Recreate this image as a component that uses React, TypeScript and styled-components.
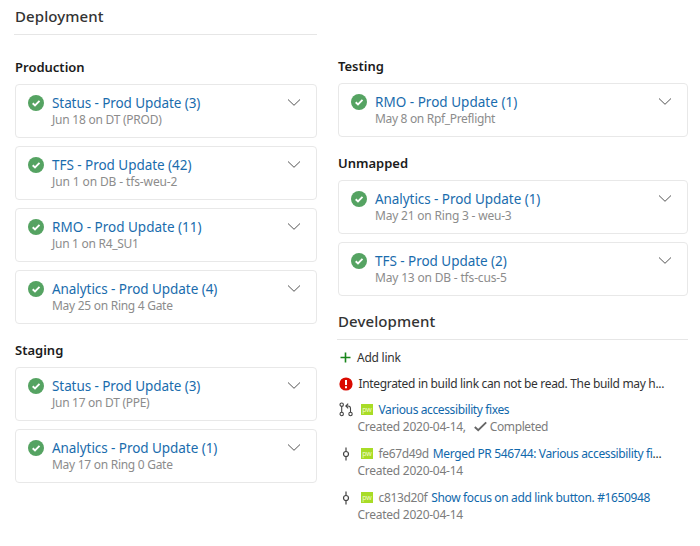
import React from "react";
import styled, { createGlobalStyle } from "styled-components";

const GlobalStyle = createGlobalStyle`
  * { box-sizing: border-box; }
  body {
    margin: 0;
    background: #fff;
    color: #323130;
    font-family: "Noto Sans", "Open Sans", sans-serif;
  }
`;

const Page = styled.main`
  display: grid;
  grid-template-columns: 303px 351px;
  column-gap: 20px;
  width: 700px;
  height: 546px;
  padding-left: 14px;
  overflow: hidden;
`;

const Column = styled.div<{ $top: number }>`
  min-width: 0;
  padding-top: ${(p) => p.$top}px;
`;

const SectionTitle = styled.h2<{ $height: number }>`
  margin: 0;
  height: ${(p) => p.$height}px;
  padding-left: 1px;
  border-bottom: 1px solid #e6e6e6;
  font-size: 15px;
  font-weight: 500;
  line-height: 24px;
  letter-spacing: 0.1px;
  color: #333;
`;

const Stage = styled.section<{ $top: number }>`
  padding: ${(p) => p.$top}px 0 0 1px;
`;

const StageTitle = styled.h3`
  margin: 0 0 7px;
  height: 20px;
  font-size: 13px;
  font-weight: 600;
  line-height: 20px;
  letter-spacing: 0;
  color: #1b1b1b;
`;

const Cards = styled.div`
  display: grid;
  gap: 8px;
`;

const Card = styled.article`
  display: grid;
  grid-template-columns: 16px 1fr 14px;
  column-gap: 8px;
  height: 54px;
  padding: 10px 15px 0 12px;
  border: 1px solid #e8e8e8;
  border-radius: 4px;
`;

const CardText = styled.div`
  min-width: 0;
  white-space: nowrap;
`;

const CardTitle = styled.a<{ $spacing: number }>`
  display: block;
  margin-top: -1px;
  font-size: 13.5px;
  line-height: 18px;
  letter-spacing: ${(p) => p.$spacing}px;
  color: #1a6cad;
`;

const CardNote = styled.div<{ $spacing: number }>`
  font-size: 12px;
  line-height: 16px;
  letter-spacing: ${(p) => p.$spacing}px;
  color: #8c8c8c;
`;

const Development = styled.section`
  padding-top: 13px;
`;

const AddLink = styled.div`
  display: grid;
  grid-template-columns: 20px 1fr;
  align-items: center;
  height: 17px;
  margin: 9px 0 9px;
  font-size: 12px;
  line-height: 17px;
`;

const DevRow = styled.div<{ $height: number }>`
  display: grid;
  grid-template-columns: 20px 1fr;
  height: ${(p) => p.$height}px;
  font-size: 12px;
  line-height: 17px;
  white-space: nowrap;
`;

const IconCell = styled.span<{ $shift?: number }>`
  display: flex;
  align-items: center;
  justify-content: center;
  width: 18px;
  height: 17px;
  padding-left: ${(p) => p.$shift ?? 0}px;
`;

const Line = styled.div`
  display: flex;
  align-items: center;
  height: 17px;
`;

const Run = styled.span<{ $color: string; $spacing: number; $gap?: number }>`
  color: ${(p) => p.$color};
  letter-spacing: ${(p) => p.$spacing}px;
  margin-left: ${(p) => p.$gap ?? 0}px;
`;

const Status = styled.span`
  display: flex;
  align-items: center;
  gap: 3px;
  margin-left: 8px;
`;

const Avatar = styled.span`
  display: flex;
  align-items: center;
  justify-content: center;
  width: 12px;
  height: 11px;
  margin: 0 5px 0 4px;
  background: #a8dc26;
  color: #eefacb;
  font-size: 7px;
  line-height: 9px;
`;

const SuccessIcon = () => (
  <svg width="16" height="16" viewBox="0 0 16 16">
    <circle cx="8" cy="8" r="8" fill="#55a362" />
    <path d="M4.7 8.2 7 10.4 11.5 5.9" fill="none" stroke="#fff" strokeWidth="1.9" />
  </svg>
);

const Chevron = () => (
  <svg width="14" height="14" viewBox="0 0 14 14">
    <path d="M1 4.5 7 10.3 13 4.5" fill="none" stroke="#555" strokeWidth="1" />
  </svg>
);

const PlusIcon = () => (
  <svg width="12" height="12" viewBox="0 0 12 12">
    <path d="M5.5 .5v10M.5 5.5h10" stroke="#18861b" strokeWidth="1.6" />
  </svg>
);

const ErrorIcon = () => (
  <svg width="14" height="14" viewBox="0 0 14 14">
    <circle cx="7" cy="7" r="6.6" fill="#da0a00" />
    <path d="M7 3v5M7 9.3v2" stroke="#fff" strokeWidth="2" />
  </svg>
);

const PullRequestIcon = () => (
  <svg width="14" height="15" viewBox="0 0 14 15" fill="none" stroke="#444" strokeWidth="1.1">
    <circle cx="2.7" cy="2.7" r="1.7" />
    <circle cx="2.7" cy="12" r="1.7" />
    <circle cx="11.5" cy="12" r="1.7" />
    <path d="M2.7 4.5v5.7M11.5 10.2V6.4Q11.5 4 9 4H6.8M9.2 1.6 6.8 4l2.4 2.4" />
  </svg>
);

const CommitIcon = () => (
  <svg width="8" height="14" viewBox="0 0 8 14" fill="none" stroke="#444" strokeWidth="1.2">
    <circle cx="4" cy="7" r="2.5" />
    <path d="M4 .5v4M4 9.5v4" />
  </svg>
);

const CheckIcon = () => (
  <svg width="13" height="11" viewBox="0 0 13 11">
    <path d="M.8 6 4.2 9.2 12.2 1.4" fill="none" stroke="#666" strokeWidth="1.9" />
  </svg>
);

type Release = { title: string; note: string; ts: number; ns: number };

const production: Release[] = [
  { title: "Status - Prod Update (3)", note: "Jun 18 on DT (PROD)", ts: -0.08, ns: -0.24 },
  { title: "TFS - Prod Update (42)", note: "Jun 1 on DB - tfs-weu-2", ts: -0.04, ns: -0.12 },
  { title: "RMO - Prod Update (11)", note: "Jun 1 on R4_SU1", ts: 0, ns: -0.28 },
  { title: "Analytics - Prod Update (4)", note: "May 25 on Ring 4 Gate", ts: -0.06, ns: -0.28 },
];
const staging: Release[] = [
  { title: "Status - Prod Update (3)", note: "Jun 17 on DT (PPE)", ts: -0.08, ns: -0.28 },
  { title: "Analytics - Prod Update (1)", note: "May 17 on Ring 0 Gate", ts: -0.06, ns: -0.28 },
];
const testing: Release[] = [
  { title: "RMO - Prod Update (1)", note: "May 8 on Rpf_Preflight", ts: 0.02, ns: -0.32 },
];
const unmapped: Release[] = [
  { title: "Analytics - Prod Update (1)", note: "May 21 on Ring 3 - weu-3", ts: -0.06, ns: -0.2 },
  { title: "TFS - Prod Update (2)", note: "May 13 on DB - tfs-cus-5", ts: -0.04, ns: -0.18 },
];

const StageGroup = ({ name, items, top }: { name: string; items: Release[]; top: number }) => (
  <Stage $top={top}>
    <StageTitle>{name}</StageTitle>
    <Cards>
      {items.map((r) => (
        <Card key={r.title}>
          <SuccessIcon />
          <CardText>
            <CardTitle $spacing={r.ts}>{r.title}</CardTitle>
            <CardNote $spacing={r.ns}>{r.note}</CardNote>
          </CardText>
          <Chevron />
        </Card>
      ))}
    </Cards>
  </Stage>
);

const BLUE = "#1068ab";
const GREY = "#7c7c7c";
const DARK = "#333";

type Commit = { hash: string; message: string; clipped?: boolean };

const commits: Commit[] = [
  { hash: "fe67d49d", message: "Merged PR 546744: Various accessibility fi", clipped: true },
  { hash: "c813d20f", message: "Show focus on add link button. #1650948" },
];

export default function App() {
  return (
    <>
      <GlobalStyle />
      <Page>
        <Column $top={4}>
          <SectionTitle $height={31}>Deployment</SectionTitle>
          <StageGroup name="Production" items={production} top={22} />
          <StageGroup name="Staging" items={staging} top={16} />
        </Column>
        <Column $top={56}>
          <StageGroup name="Testing" items={testing} top={0} />
          <StageGroup name="Unmapped" items={unmapped} top={16} />
          <Development>
            <SectionTitle $height={31}>Development</SectionTitle>
            <AddLink>
              <IconCell><PlusIcon /></IconCell>
              <Run $color={DARK} $spacing={-0.25}>Add link</Run>
            </AddLink>
            <DevRow $height={26}>
              <IconCell><ErrorIcon /></IconCell>
              <Line><Run $color={DARK} $spacing={-0.33} $gap={1.5}>Integrated in build link can not be read. The build may h...</Run></Line>
            </DevRow>
            <DevRow $height={44}>
              <IconCell><PullRequestIcon /></IconCell>
              <div>
                <Line><Avatar>pw</Avatar><Run $color={BLUE} $spacing={-0.38} $gap={0.5}>Various accessibility fixes</Run></Line>
                <Line>
                  <Run $color={GREY} $spacing={-0.26} $gap={0.5}>Created 2020-04-14,</Run>
                  <Status><CheckIcon /><Run $color={GREY} $spacing={-0.4}>Completed</Run></Status>
                </Line>
              </div>
            </DevRow>
            {commits.map((c) => (
              <DevRow key={c.hash} $height={44}>
                <IconCell><CommitIcon /></IconCell>
                <div>
                  <Line>
                    <Avatar>pw</Avatar>
                    <Run $color={GREY} $spacing={-0.35} $gap={0.5}>{c.hash}</Run>
                    <Run $color={BLUE} $spacing={-0.36} $gap={4}>{c.message}</Run>
                    {c.clipped && <Run $color={DARK} $spacing={-0.3}>...</Run>}
                  </Line>
                  <Line><Run $color={GREY} $spacing={-0.26} $gap={0.5}>Created 2020-04-14</Run></Line>
                </div>
              </DevRow>
            ))}
          </Development>
        </Column>
      </Page>
    </>
  );
}
